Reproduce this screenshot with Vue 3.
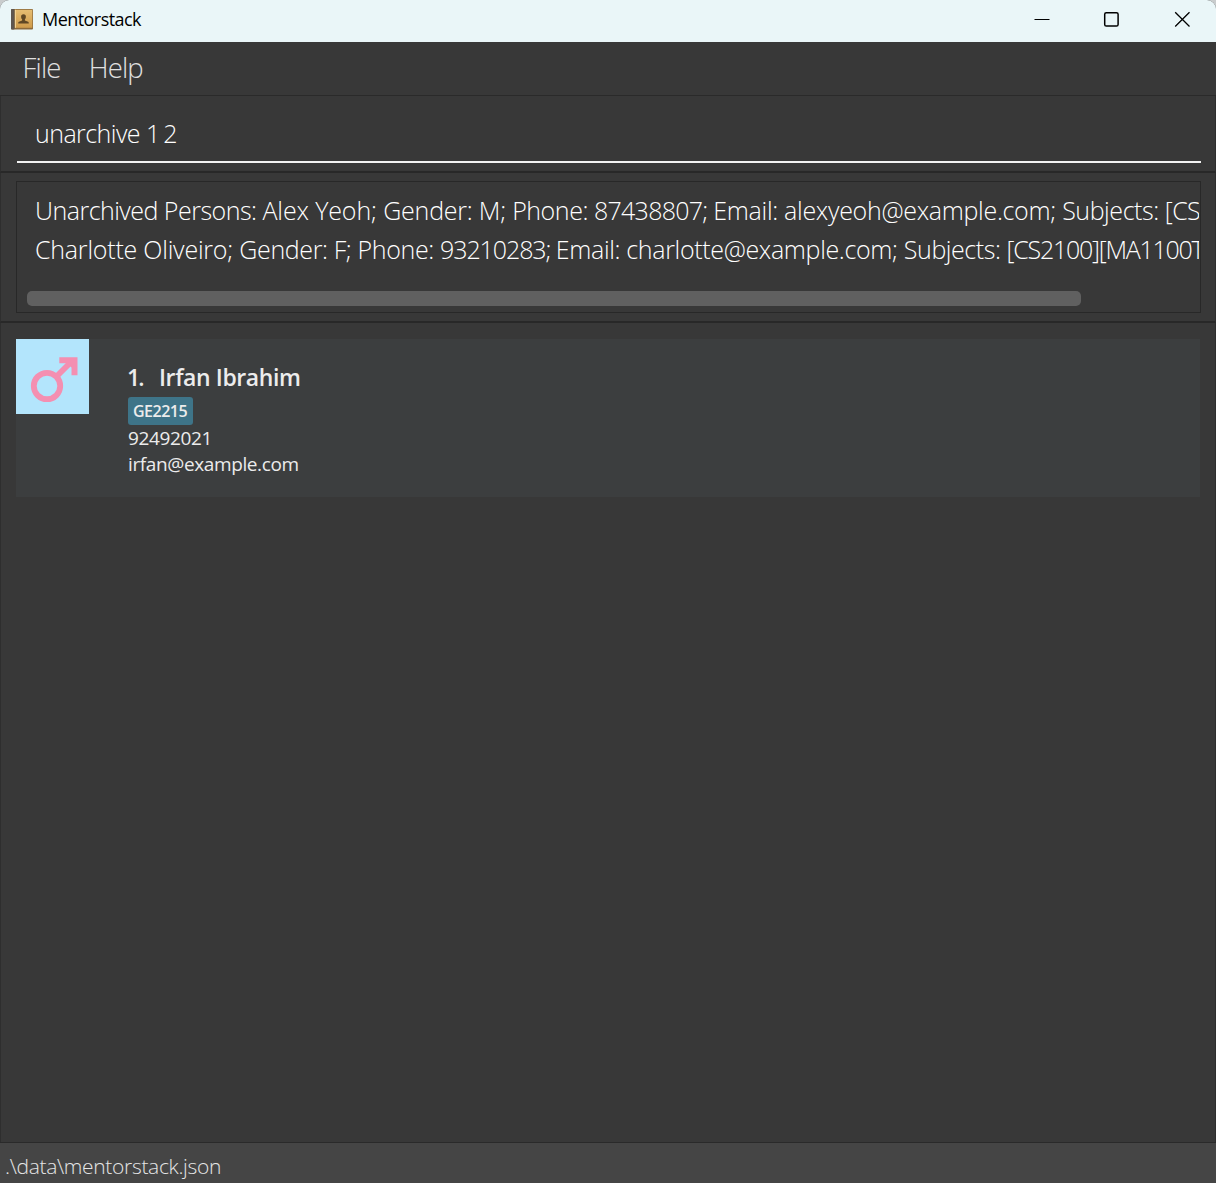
<script setup>
const menus = ['File', 'Help']
const command = [
  { text: 'unarchive ', spacing: -0.55 },
  { text: '1 2', spacing: -1.7 },
]
const resultLines = [
  [
    { text: 'Unarchived Persons: ', spacing: -0.52 },
    { text: 'Alex Yeoh; ', spacing: -0.12 },
    { text: 'Gender: M; ', spacing: -0.23 },
    { text: 'Phone: ', spacing: -0.45 },
    { text: '87438807; ', spacing: -0.73 },
    { text: 'Email: alexyeoh@example.com; ', spacing: -0.3 },
    { text: 'Subjects: ', spacing: -0.43 },
    { text: '[CS', spacing: -0.6 },
  ],
  [
    { text: 'Charlotte Oliveiro; ', spacing: -0.215 },
    { text: 'Gender: F; ', spacing: -0.38 },
    { text: 'Phone: ', spacing: -0.36 },
    { text: '93210283; ', spacing: -1.08 },
    { text: 'Email: charlotte@example.com; ', spacing: -0.34 },
    { text: 'Subjects: ', spacing: -0.43 },
    { text: '[CS2100][MA1100T]', spacing: -1.25 },
  ],
]
const persons = [
  { name: 'Irfan Ibrahim', subjects: ['GE2215'], phone: '92492021', email: 'irfan@example.com' },
]
</script>

<template>
  <div class="window">
    <header class="titlebar">
      <svg class="app-icon" width="22" height="21" viewBox="0 0 22 21">
        <defs>
          <linearGradient id="cover" x1="0" y1="0" x2="0" y2="1">
            <stop offset="0" stop-color="#e6bd72" />
            <stop offset="1" stop-color="#cf9b4a" />
          </linearGradient>
        </defs>
        <rect x="0" y="0" width="22" height="20.500" rx="1" fill="#8c6a3c" />
        <rect x="0" y="0" width="3.600" height="20.500" rx="1" fill="#5e564f" />
        <rect x="3.800" y="0.800" width="17.500" height="18" fill="url(#cover)" />
        <rect x="4" y="0.800" width="1" height="18" fill="#f0d294" />
        <path d="M12.500 5.200c1.700 0 2.500 1.100 2.400 2.700-.1 1.200-.6 1.800-1 2.400v1.200l3.200 1.200c.6.300.7.800.7 1.800H7.200c0-1 .1-1.500.7-1.800l3.200-1.200v-1.200c-.5-.6-.9-1.200-1-2.400-.1-1.600.7-2.700 2.400-2.700z" fill="#5f4724" />
      </svg>
      <span class="title">Mentorstack</span>
      <div class="controls">
        <svg width="16" height="16" viewBox="0 0 16 16"><path d="M1.500 8.500h15" stroke="#000" stroke-width="1.100" /></svg>
        <svg width="16" height="16" viewBox="0 0 16 16"><rect x="1.700" y="1.700" width="13.400" height="13.400" rx="1.600" fill="none" stroke="#000" stroke-width="1.500" /></svg>
        <svg width="16" height="16" viewBox="0 0 16 16"><path d="M1.200 1.200l14.300 14.300M15.500 1.200l-14.300 14.300" stroke="#000" stroke-width="1.300" /></svg>
      </div>
    </header>

    <nav class="menubar">
      <span v-for="m in menus" :key="m">{{ m }}</span>
    </nav>

    <section class="command">
      <div class="field"><span v-for="(part, i) in command" :key="i" :style="{ letterSpacing: part.spacing + 'px' }">{{ part.text }}</span></div>
    </section>

    <section class="result">
      <div class="result-box">
        <div class="lines">
          <p v-for="(line, i) in resultLines" :key="i"><span v-for="(part, j) in line" :key="j" :style="{ letterSpacing: part.spacing + 'px' }">{{ part.text }}</span></p>
        </div>
        <div class="scrollbar"></div>
      </div>
    </section>

    <main class="list">
      <article v-for="(p, i) in persons" :key="p.email" class="card">
        <div class="avatar">
          <svg width="73" height="75" viewBox="0 0 73 75">
            <circle cx="31" cy="47" r="13.200" fill="none" stroke="#f48fb1" stroke-width="5.800" />
            <path d="M40.500 37.500L55 23" stroke="#f48fb1" stroke-width="5.800" />
            <path d="M43.300 18.200h18.200v18h-6v-7.700l-4.500-4.300h-7.700z" fill="#f48fb1" />
          </svg>
        </div>
        <div class="info">
          <h2><span class="index">{{ i + 1 }}.</span><span>{{ p.name }}</span></h2>
          <div class="tags"><span v-for="s in p.subjects" :key="s" class="tag">{{ s }}</span></div>
          <div class="detail phone">{{ p.phone }}</div>
          <div class="detail email">{{ p.email }}</div>
        </div>
      </article>
    </main>

    <footer class="status">.\data\mentorstack.json</footer>
  </div>
</template>

<style>
body { margin: 0; background: #c9cccd; }
</style>

<style scoped>
.window {
  box-sizing: border-box;
  width: 1216px;
  height: 1183px;
  display: flex;
  flex-direction: column;
  overflow: hidden;
  border-radius: 9px 9px 0 0;
  background: #383838;
  font-family: "Open Sans", "Noto Sans", sans-serif;
  color: #fff;
}
.titlebar {
  flex: none;
  height: 42px;
  box-sizing: border-box;
  padding: 0 26px 4px 11px;
  display: flex;
  align-items: center;
  background: #eaf6f8;
  color: #000;
}
.title { margin-left: 9px; font-size: 18px; line-height: 24px; letter-spacing: -0.550px; }
.controls { margin-left: auto; display: flex; gap: 54px; }
.controls svg { display: block; overflow: visible; }
.controls svg:last-child { margin-left: 1px; }
.menubar {
  flex: none;
  height: 53px;
  padding-left: 22.500px;
  display: flex;
  gap: 28px;
  line-height: 51px;
  font-size: 27.500px;
  font-weight: 300;
  letter-spacing: -0.800px;
  color: #e0e0e0;
  border-bottom: 1px solid #2a2a2a;
}
.command, .result, .list {
  box-sizing: border-box;
  border-left: 1px solid #2e2e2e;
  border-right: 1px solid #2e2e2e;
}
.command {
  flex: none;
  height: 77px;
  padding: 0 14px 0 16px;
  border-bottom: 2px solid #282828;
}
.field {
  height: 65px;
  padding-left: 18px;
  border-bottom: 2px solid #f2f2f2;
  line-height: 75px;
  font-size: 25px;
  font-weight: 300;
  white-space: pre;
}
.result {
  flex: none;
  height: 150px;
  padding: 8px 14px 8px 15px;
  border-bottom: 2px solid #282828;
}
.result-box {
  box-sizing: border-box;
  height: 132px;
  border: 1px solid #282828;
  padding: 9px 1px 0 10px;
}
.lines {
  height: 100px;
  padding-left: 8px;
  overflow: hidden;
  white-space: pre;
  font-size: 25px;
  font-weight: 300;
  line-height: 39px;
}
.lines p { margin: 0; }
.scrollbar { width: 1054px; height: 15px; margin-left: 0.400px; border-radius: 5px; background: #606060; }
.list { flex: 1; padding: 16px 15px 0; }
.card { height: 158px; display: flex; background: #3c3e3f; }
.avatar { width: 73px; height: 75px; background: #b3e5fc; }
.avatar svg { display: block; }
.info { margin-left: 39px; padding-top: 22px; color: #ececec; }
h2 { margin: 0; height: 36px; line-height: 32px; font-size: 23px; font-weight: 600; letter-spacing: -0.400px; }
.index { display: inline-block; width: 32px; margin-left: -1px; letter-spacing: -2px; }
.tags { display: flex; height: 28px; }
.tag { padding: 0 5.500px 0 5px; line-height: 28px; border-radius: 3px; background: #3e7488; font-size: 16px; font-weight: 600; letter-spacing: -0.500px; }
.detail { height: 26px; line-height: 26px; font-size: 19px; letter-spacing: -0.380px; }
.status {
  flex: none;
  box-sizing: border-box;
  height: 41px;
  padding-left: 5px;
  border-top: 1px solid #2a2a2a;
  background: #454545;
  line-height: 47px;
  font-size: 21px;
  font-weight: 300;
  letter-spacing: -0.320px;
  color: #e6e6e6;
}
</style>
